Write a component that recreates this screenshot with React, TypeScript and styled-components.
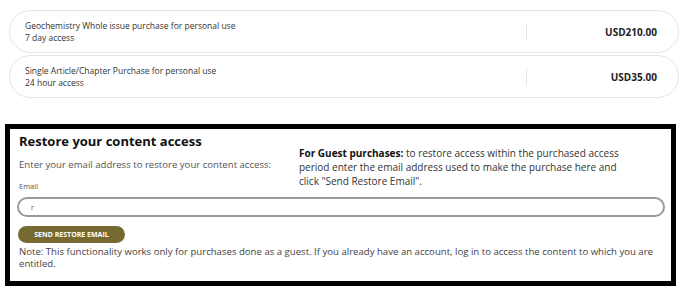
import React from 'react';
import styled, { createGlobalStyle } from 'styled-components';

const Global = createGlobalStyle`
  body {
    margin: 0;
    background: #ffffff;
    font-family: "Open Sans", "Noto Sans", sans-serif;
    color: #444;
  }
`;

const offers = [
  { title: 'Geochemistry Whole issue purchase for personal use', access: '7 day access', price: 'USD210.00' },
  { title: 'Single Article/Chapter Purchase for personal use', access: '24 hour access', price: 'USD35.00' },
];

const App = () => {
  return (
    <Page>
      <Global />
      <Offers>
        {offers.map((o) => (
          <Offer key={o.price}>
            <OfferText>
              <span>{o.title}</span>
              <span>{o.access}</span>
            </OfferText>
            <Divider />
            <Price>{o.price}</Price>
          </Offer>
        ))}
      </Offers>

      <Restore>
        <TopRow>
          <LeftCol>
            <Title>Restore your content access</Title>
            <Lead>Enter your email address to restore your content access:</Lead>
            <Label>Email</Label>
          </LeftCol>
          <GuestNote>
            <b>For Guest purchases:</b> to restore access within the purchased access
            period enter the email address used to make the purchase here and
            click "Send Restore Email".
          </GuestNote>
        </TopRow>
        <EmailInput defaultValue="r" />
        <SendBtn>SEND RESTORE EMAIL</SendBtn>
        <Note>
          Note: This functionality works only for purchases done as a guest. If you already have an account, log in to access the content to which you are entitled.
        </Note>
      </Restore>
    </Page>
  );
};

export default App;

const Page = styled.div`
  width: 689px;
  height: 299px;
  overflow: hidden;
  padding-top: 10px;
  box-sizing: border-box;
`;

const Offers = styled.div`
  display: flex;
  flex-direction: column;
  gap: 2px;
  margin: 0 10px 0 9px;
`;

const Offer = styled.div`
  height: 43px;
  box-sizing: border-box;
  border: 1px solid #e4e4e4;
  border-radius: 22px;
  display: flex;
  align-items: center;
  padding: 0 21px 0 15px;
`;

const OfferText = styled.div`
  flex: 1;
  display: flex;
  flex-direction: column;
  font-size: 8.5px;
  line-height: 12px;
  color: #333;
`;

const Divider = styled.div`
  width: 1px;
  height: 17px;
  background: #e6e6e6;
`;

const Price = styled.div`
  width: 130px;
  text-align: right;
  font-size: 10px;
  font-weight: 700;
  color: #222;
`;

const Restore = styled.div`
  margin: 26px 13px 0 5px;
  border: 5px solid #000;
  padding: 3px 6px 4px 7px;
  height: 162px;
  box-sizing: border-box;
`;

const TopRow = styled.div`
  display: flex;
  padding-left: 2px;
`;

const LeftCol = styled.div`
  width: 280px;
`;

const Title = styled.h2`
  margin: 0;
  font-size: 13px;
  line-height: 18px;
  font-weight: 700;
  color: #111;
`;

const Lead = styled.p`
  margin: 8px 0 0;
  font-size: 9.6px;
  line-height: 14px;
  color: #555;
`;

const Label = styled.div`
  margin-top: 9px;
  font-size: 7.5px;
  line-height: 10px;
  color: #555;
`;

const GuestNote = styled.p`
  width: 335px;
  margin: 14px 0 0;
  font-size: 10px;
  line-height: 14px;
  color: #333;
  b {
    color: #111;
  }
`;

const EmailInput = styled.input`
  display: block;
  width: 100%;
  height: 20px;
  margin-top: 6px;
  box-sizing: border-box;
  border: 2px solid #9a9a9a;
  border-radius: 10px;
  padding: 0 12px;
  font-family: inherit;
  font-size: 7px;
  color: #555;
  outline: none;
`;

const SendBtn = styled.button`
  display: block;
  margin: 9px 0 0 1px;
  height: 17px;
  width: 107px;
  border: none;
  border-radius: 9px;
  background: #766a32;
  color: #fff;
  font-family: inherit;
  font-size: 7px;
  font-weight: 700;
  padding: 0;
`;

const Note = styled.p`
  margin: 3px 0 0 2px;
  font-size: 9.6px;
  line-height: 11.5px;
  color: #444;
`;
